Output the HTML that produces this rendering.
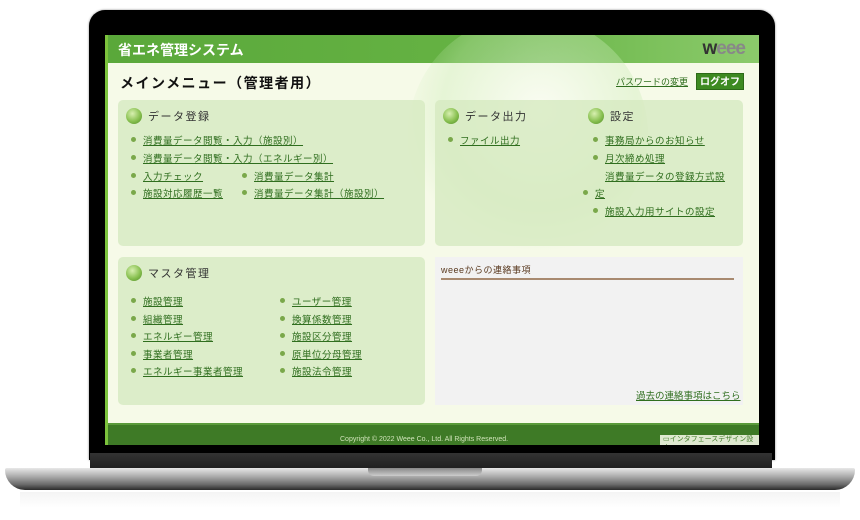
<!DOCTYPE html>
<html><head><meta charset="utf-8"><style>
*{margin:0;padding:0;box-sizing:border-box}
body{width:860px;height:520px;background:#fff;position:relative;overflow:hidden;font-family:"Liberation Sans","Noto Sans CJK JP",sans-serif}
.abs{position:absolute}
.bezel{left:89px;top:10px;width:686px;height:450px;background:#000;border-radius:16px 16px 0 0;box-shadow:0 0 2px #888}
.chin{left:90px;top:453px;width:682px;height:17px;background:linear-gradient(#333,#1e1e1e);}
.base{left:5px;top:468px;width:850px;height:22px;background:linear-gradient(#e8e8e8,#a9a9a9 40%,#6a6a6a 75%,#2a2a2a);border-radius:3px 3px 30px 30px}
.notch{left:368px;top:468px;width:114px;height:8px;background:linear-gradient(#888,#ccc);border-radius:0 0 6px 6px}
.refl{left:20px;top:492px;width:820px;height:16px;background:linear-gradient(#f4f4f4,#fff)}
.screen{left:105px;top:35px;width:654px;height:410px;background:#f6fae8;overflow:hidden;border-left:3px solid #7cc23c}
.hdr{left:0;top:0;width:654px;height:28px;background:linear-gradient(90deg,#5aa83a,#66b344 60%,#8ccb6c);color:#fff;font-size:14px;font-weight:bold;padding:5px 10px}
.globe{left:300px;top:-20px;width:240px;height:240px;border-radius:50%;background:radial-gradient(circle at 55% 40%,rgba(255,255,255,.45),rgba(200,235,180,.35) 50%,rgba(246,250,232,0) 72%)}
.weee{right:14px;top:3px;font-size:19px;color:#888;font-weight:bold;letter-spacing:-1px}
.weee b{color:#333}
.title{left:12px;top:38px;font-size:14px;font-weight:bold;color:#111;letter-spacing:1.5px}
.pw{left:508px;top:40px;font-size:9px;color:#2f6e1e;text-decoration:underline}
.logoff{left:588px;top:38px;width:48px;height:17px;background:#3d8a21;color:#fff;font-size:10px;font-weight:bold;text-align:center;line-height:17px;border:1px solid #2c6a17}
.panel{background:rgba(214,234,192,.8);border-radius:5px}
.ph{font-size:11px;color:#333;letter-spacing:1.5px;display:flex;align-items:center;position:absolute}
.ball{width:16px;height:16px;border-radius:50%;background:radial-gradient(circle at 40% 35%,#d8f0b0,#88c050 55%,#4d8a25);margin-right:6px}
.l{position:absolute;font-size:9.5px;color:#2f6e1e;text-decoration:underline;white-space:nowrap;letter-spacing:.5px}
.l:before{content:"";position:absolute;left:-12px;top:4px;width:5px;height:5px;border-radius:50%;background:#7aa84a}
.l.nb:before{display:none}
.foot{left:0;top:388px;width:654px;height:22px;background:#3e7a26;border-top:2px solid #5a9a3a}
.copy{left:232px;top:401px;font-size:7px;color:#cfe3b8}
.ifd{left:552px;top:400px;font-size:7px;color:#3e7a26;background:#dfe9d0;padding:0 3px;line-height:9px}
</style></head><body>
<div class="abs refl"></div>
<div class="abs bezel"></div>
<div class="abs chin"></div>
<div class="abs base"></div>
<div class="abs notch"></div>
<div class="abs screen">
 <div class="abs hdr">省エネ管理システム</div>
 <div class="abs globe"></div>
 <div class="abs weee"><b>w</b>eee</div>
 <div class="abs title">メインメニュー（管理者用）</div>
 <div class="abs pw">パスワードの変更</div>
 <div class="abs logoff">ログオフ</div>

 <div class="abs panel" style="left:10px;top:65px;width:307px;height:146px"></div>
 <div class="ph" style="left:18px;top:73px"><span class="ball"></span>データ登録</div>
 <span class="l" style="left:35px;top:98px">消費量データ閲覧・入力（施設別）</span>
 <span class="l" style="left:35px;top:116px">消費量データ閲覧・入力（エネルギー別）</span>
 <span class="l" style="left:35px;top:134px">入力チェック</span>
 <span class="l" style="left:146px;top:134px">消費量データ集計</span>
 <span class="l" style="left:35px;top:151px">施設対応履歴一覧</span>
 <span class="l" style="left:146px;top:151px">消費量データ集計（施設別）</span>

 <div class="abs panel" style="left:327px;top:65px;width:308px;height:146px"></div>
 <div class="ph" style="left:335px;top:73px"><span class="ball"></span>データ出力</div>
 <span class="l" style="left:352px;top:98px">ファイル出力</span>
 <div class="ph" style="left:480px;top:73px"><span class="ball"></span>設定</div>
 <span class="l" style="left:497px;top:98px">事務局からのお知らせ</span>
 <span class="l" style="left:497px;top:116px">月次締め処理</span>
 <span class="l nb" style="left:497px;top:134px">消費量データの登録方式設</span>
 <span class="l" style="left:487px;top:151px">定</span>
 <span class="l" style="left:497px;top:169px">施設入力用サイトの設定</span>

 <div class="abs panel" style="left:10px;top:222px;width:307px;height:148px"></div>
 <div class="ph" style="left:18px;top:230px"><span class="ball"></span>マスタ管理</div>
 <span class="l" style="left:35px;top:259px">施設管理</span>
 <span class="l" style="left:35px;top:277px">組織管理</span>
 <span class="l" style="left:35px;top:294px">エネルギー管理</span>
 <span class="l" style="left:35px;top:312px">事業者管理</span>
 <span class="l" style="left:35px;top:329px">エネルギー事業者管理</span>
 <span class="l" style="left:184px;top:259px">ユーザー管理</span>
 <span class="l" style="left:184px;top:277px">換算係数管理</span>
 <span class="l" style="left:184px;top:294px">施設区分管理</span>
 <span class="l" style="left:184px;top:312px">原単位分母管理</span>
 <span class="l" style="left:184px;top:329px">施設法令管理</span>

 <div class="abs" style="left:327px;top:222px;width:308px;height:148px;background:#f2f2f2"></div>
 <div class="abs" style="left:333px;top:228px;width:293px;font-size:9px;color:#5a3a20;border-bottom:2px solid #a88a70;padding-bottom:2px;letter-spacing:.5px">weeeからの連絡事項</div>
 <span class="l nb" style="left:528px;top:353px;letter-spacing:0">過去の連絡事項はこちら</span>

 <div class="abs foot"></div>
 <div class="abs copy">Copyright © 2022 Weee Co., Ltd. All Rights Reserved.</div>
 <div class="abs ifd">▭インタフェースデザイン設定</div>
</div>
</body></html>
